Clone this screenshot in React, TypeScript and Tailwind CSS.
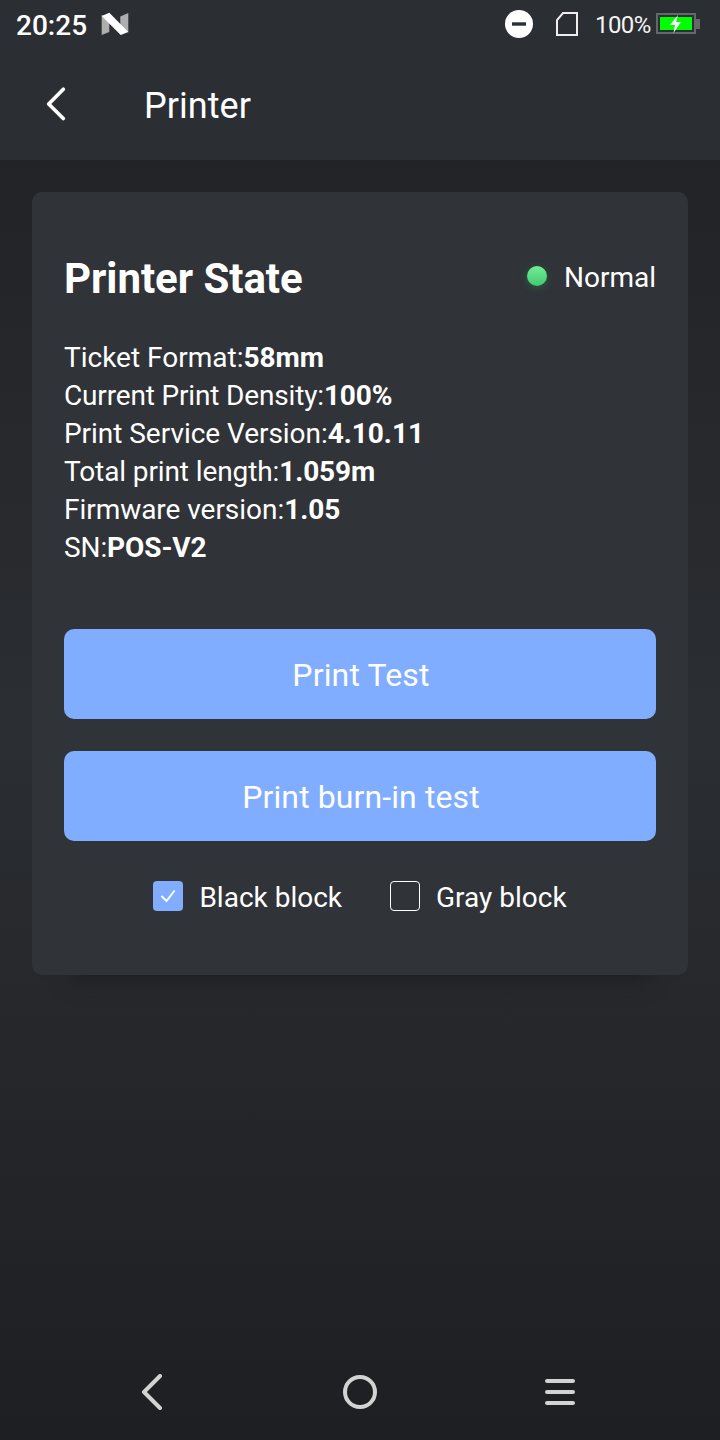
const DETAILS: { label: string; value: string; tracking: string }[] = [
  { label: "Ticket Format:", value: "58mm", tracking: "" },
  { label: "Current Print Density:", value: "100%", tracking: "tracking-[-0.16px]" },
  { label: "Print Service Version:", value: "4.10.11", tracking: "tracking-[-0.04px]" },
  { label: "Total print length:", value: "1.059m", tracking: "tracking-[-0.11px]" },
  { label: "Firmware version:", value: "1.05", tracking: "tracking-[-0.04px]" },
  { label: "SN:", value: "POS-V2", tracking: "tracking-[-0.1px]" },
];

function StatusBar() {
  return (
    <div className="flex h-12 items-center pl-4 pr-5">
      <span className="pt-[3px] text-[28px] leading-8 font-medium">20:25</span>
      <svg className="ml-[14px] h-6 w-7" viewBox="0 0 28 24">
        <path d="M.7 3v20l7.6-3V7z" fill="#adaeb0" />
        <path d="M27.3 1v19.5L19.3 16V4.6z" fill="#adaeb0" />
        <path d="M.7 4 8.300.8 27.300 20 19.700 23z" fill="#fff" />
      </svg>
      <svg className="ml-auto h-7 w-7" viewBox="0 0 28 28">
        <circle cx="14" cy="14" r="14" fill="#fff" />
        <path d="M7 14h14" stroke="#2b2e33" strokeWidth="3.4" />
      </svg>
      <svg className="ml-[23px] h-6 w-[22px]" viewBox="0 0 22 24">
        <path d="M7 1h14v22H1V8z" fill="none" stroke="#eeeeef" strokeWidth="2" />
      </svg>
      <span className="ml-[17px] w-[57px] pt-[2px] text-[24px] leading-7 tracking-[-0.6px] whitespace-nowrap text-[#f4f4f4]">
        100%
      </span>
      <svg className="ml-[4px] h-[22px] w-[44px]" viewBox="0 0 44 22">
        <rect x="1" y="1" width="38" height="19" fill="none" stroke="#65676b" strokeWidth="2" />
        <path d="M40 6h4v10h-4z" fill="#65676b" />
        <rect x="4" y="4" width="32" height="13" fill="#0f0" />
        <path d="m22 2-8 10h5l-1.500 8L25 9h-5z" fill="#fff" />
      </svg>
    </div>
  );
}

function Header() {
  return (
    <header className="h-40 bg-[#2b2e33]">
      <StatusBar />
      <div className="flex h-28 items-center pl-[46px]">
        <svg className="h-9 w-5" viewBox="0 0 20 36" fill="none" stroke="#fff" strokeWidth="3.700" strokeLinecap="round" strokeLinejoin="round">
          <path d="M17.300 3.300 2.700 18 17.300 32.500" />
        </svg>
        <h1 className="ml-[78px] pt-[3px] text-[36px] leading-[42px] tracking-[0.05px]">Printer</h1>
      </div>
    </header>
  );
}

function CheckOption({ label, checked }: { label: string; checked: boolean }) {
  return (
    <div className="flex items-start gap-4">
      {checked ? (
        <div className="flex h-[30px] w-[30px] items-center justify-center rounded bg-[#80adff]">
          <svg className="h-[30px] w-[30px]" viewBox="0 0 30 30" fill="none" stroke="#fff" strokeWidth="2" strokeLinecap="round">
            <path d="m9 15.500 4.500 4.500L21.200 10" />
          </svg>
        </div>
      ) : (
        <div className="h-[30px] w-[30px] rounded border border-white" />
      )}
      <span className="text-[28px] leading-[34px]">{label}</span>
    </div>
  );
}

function PrinterCard() {
  return (
    <section className="mx-8 mt-8 h-[783px] rounded-[10px] bg-[#303338] px-8 pt-[60px] shadow-[0_44px_20px_-40px_rgba(26,27,29,0.75)]">
      <div className="flex h-[52px] items-center">
        <h2 className="pt-[2px] text-[42px] leading-[50px] font-bold tracking-[-0.05px]">Printer State</h2>
        <span className="mr-[17px] mb-1 ml-auto h-5 w-5 rounded-full bg-linear-to-b from-[#6eed96] to-[#43ca70] shadow-[0_2px_8px_rgba(40,190,70,0.3)]" />
        <span className="text-[28px] leading-[34px]">Normal</span>
      </div>
      <div className="mt-[35px] text-[28px] leading-[38px]">
        {DETAILS.map(({ label, value, tracking }) => (
          <p key={label} className={tracking}>
            {label}
            <b>{value}</b>
          </p>
        ))}
      </div>
      <button className="mt-[62px] flex h-[90px] w-full items-center justify-center rounded-[10px] bg-[#80adff] pt-px pl-[2px] text-[32px] tracking-[0.15px]">
        Print Test
      </button>
      <button className="mt-8 flex h-[90px] w-full items-center justify-center rounded-[10px] bg-[#80adff] pt-px pl-[2px] text-[32px] tracking-[0.1px]">
        Print burn-in test
      </button>
      <div className="mt-10 flex justify-center gap-12">
        <CheckOption label="Black block" checked />
        <CheckOption label="Gray block" checked={false} />
      </div>
    </section>
  );
}

function NavigationBar() {
  return (
    <nav className="mt-auto flex h-24 items-center pl-[141px]">
      <svg className="h-9 w-[22px]" viewBox="0 0 22 36" fill="none" stroke="#d3d3d3" strokeWidth="4" strokeLinecap="round" strokeLinejoin="round">
        <path d="M19 2 3 18l16 16" />
      </svg>
      <svg className="ml-[180px] h-[34px] w-[34px]" viewBox="0 0 34 34" fill="none" stroke="#d3d3d3" strokeWidth="4">
        <circle cx="17" cy="17" r="15" />
      </svg>
      <svg className="ml-[168px] h-[26px] w-[30px]" viewBox="0 0 30 26" stroke="#d3d3d3" strokeWidth="4" strokeLinecap="round">
        <path d="M2 2h26M2 13h26M2 24h26" />
      </svg>
    </nav>
  );
}

export default function App() {
  return (
    <div className="flex h-[1440px] w-[720px] flex-col overflow-hidden bg-[#202124] font-['Roboto',sans-serif] text-white">
      <Header />
      <main className="flex flex-1 flex-col bg-linear-to-b from-[#222326] via-[#2b2e32] via-44% to-[#1e1f22]">
        <PrinterCard />
        <NavigationBar />
      </main>
    </div>
  );
}
